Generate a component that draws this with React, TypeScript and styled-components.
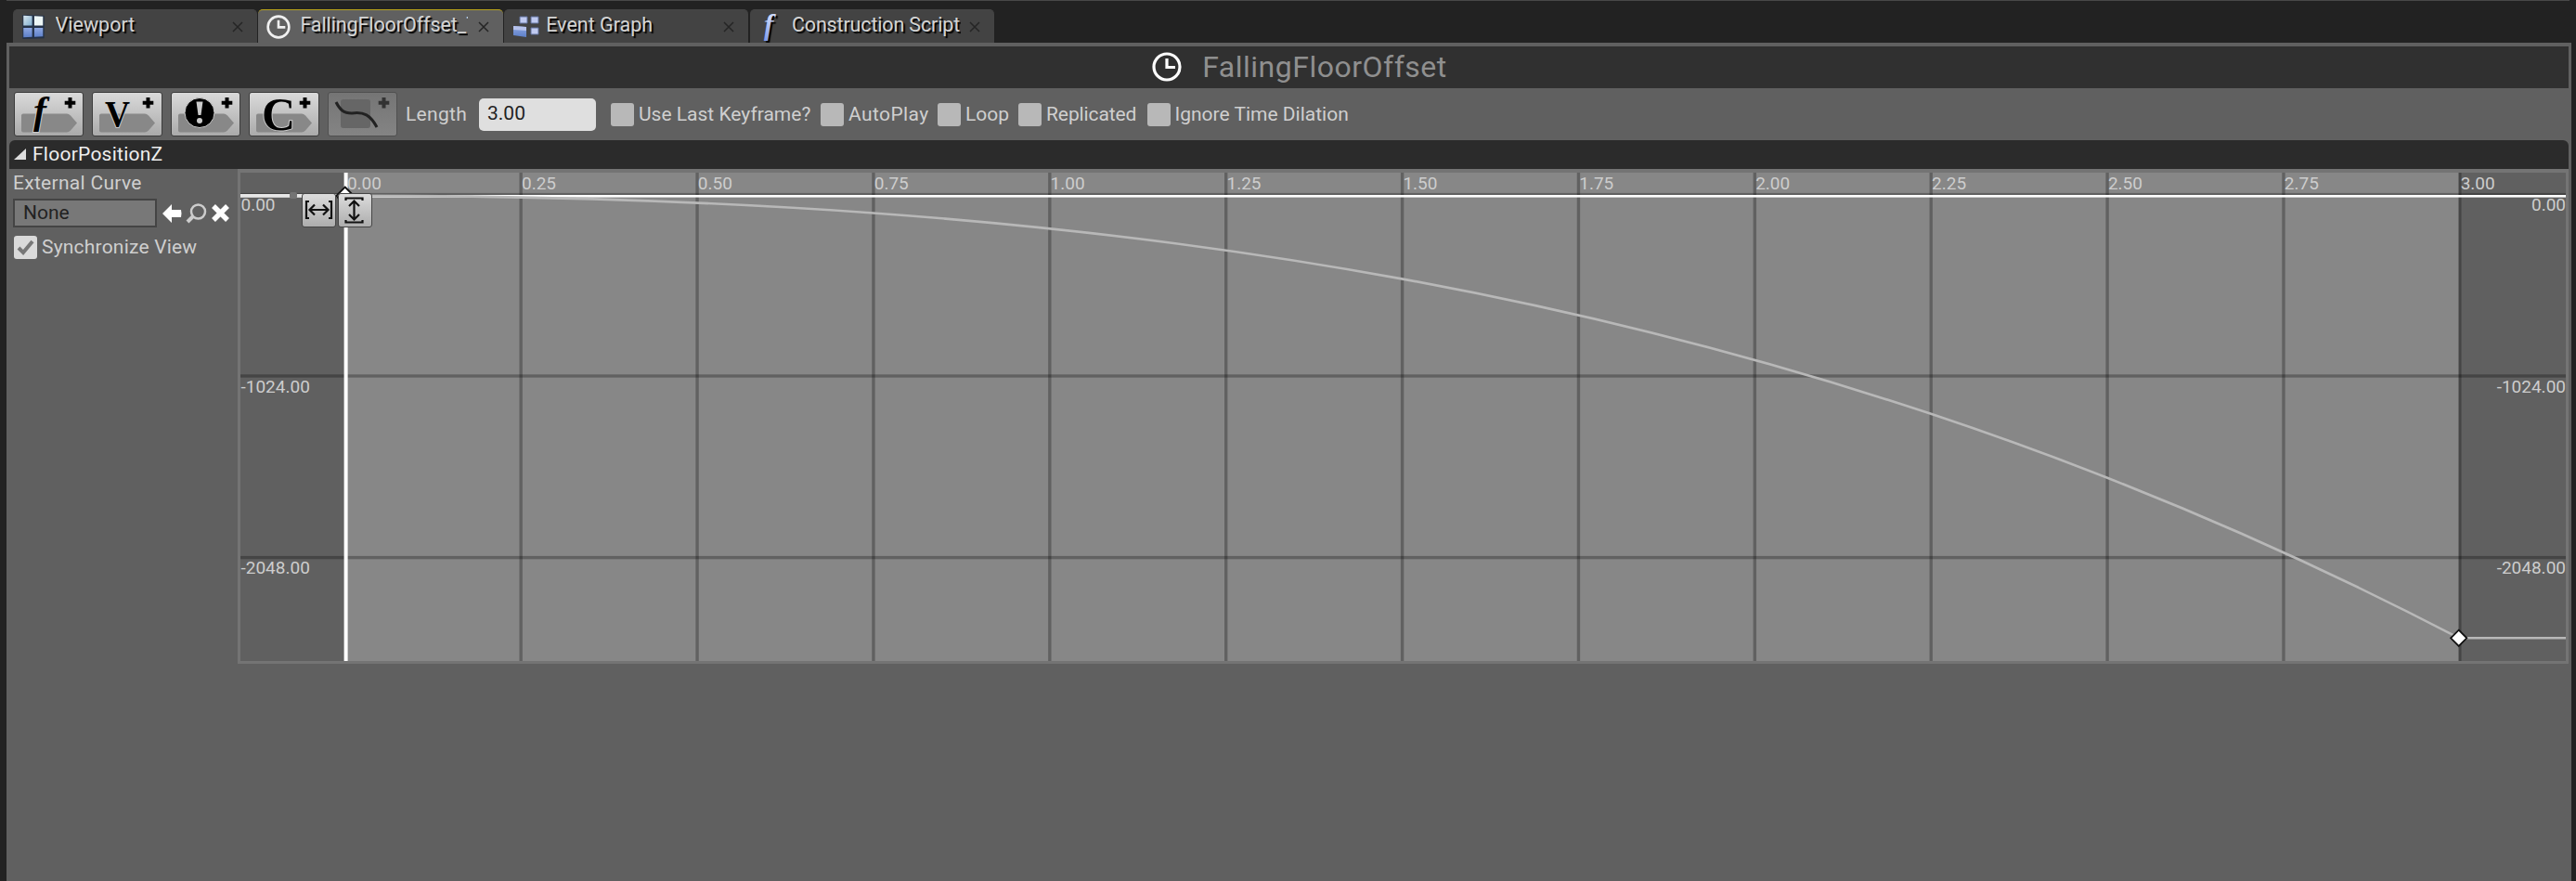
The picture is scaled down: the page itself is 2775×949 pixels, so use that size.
import React from 'react';
import styled, { createGlobalStyle } from 'styled-components';

const Global = createGlobalStyle`
  * { box-sizing: border-box; }
  body { margin: 0; background: #222; overflow: hidden; }
`;
const Window = styled.div`
  width: 2775px; height: 949px; background: #222; display: flex; flex-direction: column;
  font: 21px Roboto, sans-serif; color: #cfcfcf; padding: 0 5px 0 7px; white-space: nowrap;
`;
const TopEdge = styled.div`height: 1px; background: #484848; flex: none; margin-right: 2px;`;
const Tabs = styled.nav`display: flex; gap: 1.6px; padding: 9px 0 0 6.6px; height: 45px; flex: none;`;
const Tab = styled.div<{ $active?: boolean }>`
  width: 263.2px; height: 36px; display: flex; align-items: center; padding: 0 15px 0 9px;
  border-radius: 5px 5px 0 0; background: ${p => (p.$active ? '#606060' : '#434343')};
  border-top: 1px solid ${p => (p.$active ? '#b8a21c' : '#464646')};
  color: #d4d4d4; text-shadow: 2px 2px 1px #000; font-size: 21.5px;
  svg { flex: none; overflow: visible; }
`;
const TabLabel = styled.span<{ $w: number; $s?: number; $ml: number }>`
  flex: none; width: ${p => p.$w}px; margin-left: ${p => p.$ml}px; overflow: hidden;
  letter-spacing: ${p => p.$s || 0}px; line-height: 30px; margin-top: -4px;
`;
const CloseMark = styled.svg`margin-left: auto; margin-top: 1px;`;
const Panel = styled.main`flex: 1; background: #606060; padding: 4px 3px 0; display: flex; flex-direction: column;`;
const TitleBar = styled.header`
  height: 45px; background: #303030; display: flex; align-items: center; justify-content: center;
  gap: 22px; font-size: 32px; color: #8f8f8f; flex: none; padding: 0 0 2px 23px;
`;
const Title = styled.span`letter-spacing: 0.5px;`;
const Toolbar = styled.div`height: 56px; display: flex; align-items: center; padding: 0 0 0 4.5px; flex: none;`;
const ToolButton = styled.button<{ $off?: boolean }>`
  width: 75.5px; height: 48px; margin-right: 9px; padding: 0; border-radius: 3px; flex: none;
  border: 1px solid ${p => (p.$off ? '#505050' : '#3c3c3c')};
  background: ${p => (p.$off ? 'linear-gradient(#757575,#848484)' : 'linear-gradient(#dadada,#aaa)')};
  svg { display: block; overflow: visible; }
`;
const Label = styled.span<{ $w: number; $s?: number }>`
  width: ${p => p.$w}px; letter-spacing: ${p => p.$s || 0}px; flex: none; line-height: 24px; padding-bottom: 1px;
`;
const LengthInput = styled.div`
  width: 126px; height: 35px; border-radius: 5px; background: #dfdfdf; color: #222; padding-left: 9px;
  line-height: 33px; margin-right: 16px;
`;
const Check = styled.span`
  width: 25px; height: 25px; border-radius: 3px; background: #b8b8b8; margin-right: 5px; flex: none;
  display: flex; align-items: center; justify-content: center;
`;
const SyncCheck = styled(Check)`background: #dadada; margin: 0 5px 0 1px;`;
const Section = styled.div`
  height: 31px; background: #2b2b2b; border-radius: 6px 6px 0 0; display: flex; align-items: center;
  padding-left: 5px; gap: 7px; color: #eee; flex: none;
`;
const Body = styled.div`display: flex;`;
const Side = styled.aside`width: 246px; padding: 2px 0 0 4px; flex: none;`;
const Row = styled.div<{ $h: number }>`height: ${p => p.$h}px; display: flex; align-items: center;`;
const AssetBox = styled.div`
  width: 155px; height: 31px; border: 2px solid #444; background: #787878; color: #222;
  line-height: 26px; padding-left: 9px; margin-right: 6px;
`;
const Curve = styled.section`
  position: relative; border: solid #747474; border-width: 4px 3px 3px; width: 2511px; height: 533px;
  svg { display: block; }
`;
const TickText = styled.text`font: 19px Roboto, sans-serif; fill: #cdcdcd; letter-spacing: 0px;`;
const FitTools = styled.div`position: absolute; left: 65.5px; top: 22px; display: flex; gap: 2px;`;
const FitButton = styled.button`
  width: 37px; height: 37px; padding: 0; border: 1px solid #454545; border-radius: 3px;
  background: linear-gradient(#dcdcdc, #adadad);
`;
const Glyph = styled.text`font-family: "Liberation Serif", serif; font-weight: bold; stroke: #ccc; stroke-width: 2px; paint-order: stroke;`;

const gridX = (k: number) => 112.3 + 189.88 * k;
const values: [string, number][] = [['0.00', 23.6], ['-1024.00', 219], ['-2048.00', 414.6]];
const ticks = Array.from({ length: 13 }, (_, k) => k);

const Clock = ({ size, color }: { size: number; color: string }) => (
  <svg width={size} height={size} viewBox="0 0 32 32" fill="none" stroke={color} strokeWidth="3.2">
    <circle cx="16" cy="16" r="14" /><path d="M16 7v9.500h9" />
  </svg>
);
const Arrow = () => <path d="M9 22.500h47q2 0 4 2l7 8-7 8q-2 2-4 2H9q-2 0-2-2V24.500q0-2 2-2z" fill="#888" />;
const Plus = ({ c = '#000' }: { c?: string }) => <path d="M59.500 5v11.500M53.700 10.700h11.600" stroke={c} strokeWidth="4" />;
const Close = () => (
  <CloseMark width="12" height="12" viewBox="0 0 12 12"><path d="M1 1l10 10M11 1L1 11" stroke="#252525" strokeWidth="1.5" /></CloseMark>
);

const options: [string, number, number][] = [
  ['Use Last Keyframe?', 196, 0], ['AutoPlay', 96, 0.4], ['Loop', 57, 0], ['Replicated', 108.5, -0.1], ['Ignore Time Dilation', 190, 0],
];

export default function App() {
  return (
    <Window>
      <Global />
      <TopEdge />
      <Tabs>
        <Tab>
          <svg width="26" height="28" viewBox="0 0 27 30">
            <defs>
              <linearGradient id="sky" x2="1" y2="1"><stop stopColor="#d9e6ee" /><stop offset="1" stopColor="#80afd0" /></linearGradient>
              <linearGradient id="blue" x2="0" y2="1"><stop stopColor="#8fa8e2" /><stop offset="1" stopColor="#5c7fc8" /></linearGradient>
              <linearGradient id="script" x2="0" y2="1"><stop stopColor="#e4ebff" /><stop offset="1" stopColor="#7f9cec" /></linearGradient>
            </defs>
            <path d="M1 1l25 1v26L1 29z" fill="#243248" />
            <path d="M2 2l10 .5v11H2z" fill="url(#sky)" /><path d="M14.500 2.500l10 .5v10.500h-10z" fill="#edf6f6" />
            <path d="M2 16h10v10.500L2 27zM14.500 16h10v10l-10 .5z" fill="url(#blue)" />
          </svg>
          <TabLabel $w={150} $ml={11}>Viewport</TabLabel><Close />
        </Tab>
        <Tab $active>
          <Clock size={26} color="#f0f0f0" />
          <TabLabel $w={181} $s={-0.1} $ml={10}>FallingFloorOffset_T</TabLabel><Close />
        </Tab>
        <Tab>
          <svg width="30" height="26" viewBox="0 0 30 26">
            <path d="M8 2h8v7H8zM20 2h8v7h-8zM20 14h8v7h-8z" fill="#c0caf0" stroke="#60709c" />
            <path d="M1 12l14 1v11L1 22z" fill="url(#blue)" /><path d="M1 12l14 1v4L1 16z" fill="#b6c2ec" />
          </svg>
          <TabLabel $w={150} $ml={6}>Event Graph</TabLabel><Close />
        </Tab>
        <Tab>
          <svg width="26" height="32" viewBox="0 0 26 32">
            <text x="6" y="24" fontFamily="Liberation Serif, serif" fontWeight="bold" fontStyle="italic" fontSize="31" fill="url(#script)">f</text>
          </svg>
          <TabLabel $w={182} $s={-0.15} $ml={10}>Construction Script</TabLabel><Close />
        </Tab>
      </Tabs>
      <Panel>
        <TitleBar><Clock size={32} color="#fff" /><Title>FallingFloorOffset</Title></TitleBar>
        <Toolbar>
          <ToolButton><svg width="73" height="46"><Arrow /><Glyph x="20" y="33" fontSize="42" fontStyle="italic">f</Glyph><Plus /></svg></ToolButton>
          <ToolButton><svg width="73" height="46"><Arrow /><Glyph x="13" y="36" fontSize="40" textLength="27" lengthAdjust="spacingAndGlyphs">V</Glyph><Plus /></svg></ToolButton>
          <ToolButton>
            <svg width="73" height="46">
              <Arrow /><circle cx="30" cy="21.500" r="16" stroke="#ccc" />
              <path d="M26.500 9.500h7l-2 14.500h-3z" fill="#ccc" /><circle cx="30" cy="30" r="3" fill="#ccc" /><Plus />
            </svg>
          </ToolButton>
          <ToolButton><svg width="73" height="46"><Arrow /><Glyph x="13" y="40" fontSize="50">C</Glyph><Plus /></svg></ToolButton>
          <ToolButton $off>
            <svg width="73" height="46">
              <rect x="13" y="7" width="32" height="31" rx="3" fill="#666" />
              <path d="M8 10C12 18 16 22 25 22C38 20 45 24 52 37" fill="none" stroke="#222" strokeWidth="3" /><Plus c="#333" />
            </svg>
          </ToolButton>
          <Label $w={79} $s={0.3}>Length</Label>
          <LengthInput>3.00</LengthInput>
          {options.map(([t, w, s]) => <React.Fragment key={t}><Check /><Label $w={w} $s={s}>{t}</Label></React.Fragment>)}
        </Toolbar>
        <Section>
          <svg width="13" height="13"><path d="M13 0v12H0z" fill="#ddd" /></svg>
          <Label $w={150} $s={0.25}>FloorPositionZ</Label>
        </Section>
        <Body>
          <Side>
            <Row $h={27}><Label $w={150} $s={0.3}>External Curve</Label></Row>
            <Row $h={37}>
              <AssetBox>None</AssetBox>
              <svg width="74" height="22" viewBox="0 0 74 22">
                <path d="M0 11L10 1v6h10q1 4 0 8H10v6z" fill="#fff" />
                <circle cx="38.500" cy="9" r="7.500" fill="none" stroke="#ccc" strokeWidth="2.500" /><path d="M33 14l-6 6" stroke="#ccc" strokeWidth="4" />
                <path d="M55 3l15 15M70 3L55 18" stroke="#fff" strokeWidth="5.500" />
              </svg>
            </Row>
            <Row $h={36}>
              <SyncCheck><svg width="20" height="18"><path d="M2 10l5 5L17 3" fill="none" stroke="#777" strokeWidth="4" /></svg></SyncCheck>
              <Label $w={170} $s={0.2}>Synchronize View</Label>
            </Row>
          </Side>
          <Curve>
            <svg width="2505" height="526">
              <rect x="112" width="2278" height="526" fill="#878787" />
              {ticks.slice(1).map(k => <rect key={k} x={gridX(k) - 1.7} width="3.4" height="526" fill="#000" opacity="0.28" />)}
              {values.map(([v, y]) => <rect key={v} y={y - 1.7} width="2505" height="3.4" fill="#000" opacity="0.28" />)}
              <rect y="24" width="2505" height="2.6" fill="#fff" />
              <path d="M0 24.700H112" stroke="#e6e6e6" strokeWidth="3.2" />
              <path d="M112.500 24.700C871.500 24.700 1630.700 105 2389.700 501.200H2505" fill="none" stroke="#b8b8b8" strokeWidth="2.6" />
              <rect x="111.600" width="4" height="526" fill="#fff" />
              <rect x="53" y="21" width="8" height="7" rx="2" fill="#747474" />
              <path d="M112.700 15.500l9.500 9.500-9.500 9.500-9.500-9.500z" fill="#fff" stroke="#111" strokeWidth="1.8" />
              <path d="M2389.700 492.700l8.600 8.600-8.600 8.600-8.600-8.600z" fill="#fff" stroke="#111" strokeWidth="1.8" />
              {ticks.map(k => <TickText key={k} x={gridX(k) + (k ? 0.8 : 2.6)} y="18">{(k * 0.25).toFixed(2)}</TickText>)}
              {values.map(([v, y]) => (
                <React.Fragment key={v}>
                  <TickText x="0.500" y={y + 17.500}>{v}</TickText>
                  <TickText x="2505" y={y + 17.500} textAnchor="end">{v}</TickText>
                </React.Fragment>
              ))}
            </svg>
            <FitTools>
              <FitButton>
                <svg width="35" height="35" fill="none" stroke="#111" strokeWidth="2.200">
                  <path d="M7 8H4v18h3M28 8h3v18h-3M8 17h19M13 11.500L7.500 17l5.500 5.500M22 11.500l5.500 5.500-5.500 5.500" />
                </svg>
              </FitButton>
              <FitButton>
                <svg width="35" height="35" fill="none" stroke="#111" strokeWidth="2.200">
                  <path d="M7.500 7V4.500h18V7M7.500 28v2.500h18V28M16.500 8v19M11 13l5.500-5.500L22 13M11 22l5.500 5.500L22 22" />
                </svg>
              </FitButton>
            </FitTools>
          </Curve>
        </Body>
      </Panel>
    </Window>
  );
}
